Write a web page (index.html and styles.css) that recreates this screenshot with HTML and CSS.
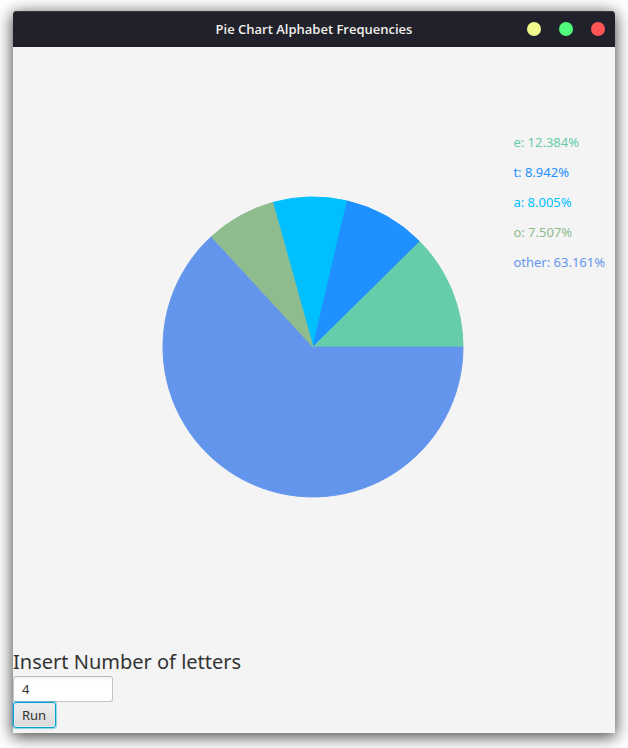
FILE: index.html
```html
<!DOCTYPE html>
<html lang="en">
<head>
<meta charset="utf-8">
<title>Pie Chart Alphabet Frequencies</title>
<link rel="stylesheet" href="styles.css">
</head>
<body>
<div class="window">
  <header class="titlebar">
    <h1 class="title">Pie Chart Alphabet Frequencies</h1>
    <div class="controls">
      <button class="control minimize" type="button" aria-label="Minimize"></button>
      <button class="control maximize" type="button" aria-label="Maximize"></button>
      <button class="control close" type="button" aria-label="Close"></button>
    </div>
  </header>
  <main class="content">
    <section class="chart-area">
      <svg class="pie" viewBox="-151 -151 304 302" width="304" height="302" role="img" aria-label="Letter frequencies">
        <path class="slice-a" d="M0 0L34.3 -146A150 150 0 0 0 -40.3 -144.5Z"/>
        <path class="slice-t" d="M0 0L106.8 -105.3A150 150 0 0 0 34.3 -146Z"/>
        <path class="slice-e" d="M0 0L150 0A150 150 0 0 0 106.8 -105.3Z"/>
        <path class="slice-other" d="M0 0L-101.6 -110.4A150 150 0 1 0 150 0Z"/>
        <path class="slice-o" d="M0 0L-40.3 -144.5A150 150 0 0 0 -101.6 -110.4Z"/>
      </svg>
      <ul class="legend">
        <li class="text-e">e: 12.384%</li>
        <li class="text-t">t: 8.942%</li>
        <li class="text-a">a: 8.005%</li>
        <li class="text-o">o: 7.507%</li>
        <li class="text-other">other: 63.161%</li>
      </ul>
    </section>
    <form class="form">
      <label class="label" for="count">Insert Number of letters</label>
      <input class="field" id="count" type="text" value="4">
      <button class="run" type="button">Run</button>
    </form>
  </main>
</div>
</body>
</html>
```
FILE: styles.css
```css
* {
  box-sizing: border-box;
}

body {
  margin: 0;
  min-height: 100vh;
  padding: 11px 13px 15px;
  display: flex;
  background: #fff;
  color: #333;
  font: 13px/18px "Noto Sans", sans-serif;
}

.window {
  flex: 1;
  display: flex;
  flex-direction: column;
  background: #f4f4f4;
  border-radius: 4px 4px 0 0;
  box-shadow: 0 3px 16px 1px rgba(0, 0, 0, 0.72);
}

.titlebar {
  display: grid;
  grid-template-columns: 1fr auto 1fr;
  align-items: center;
  height: 36px;
  padding: 0 10px;
  background: #21212b;
  box-shadow: inset 0 1px #363c42;
  border-radius: 4px 4px 0 0;
}

.title {
  grid-column: 2;
  margin: 0;
  color: #f0f0ea;
  font-family: "Open Sans", "Noto Sans", sans-serif;
  font-size: 13px;
  font-weight: 600;
}

.controls {
  display: flex;
  justify-content: flex-end;
  gap: 18px;
}

.control {
  width: 14px;
  height: 14px;
  padding: 0;
  border: 0;
  border-radius: 50%;
}

.minimize { background: #f1fa8c; }
.maximize { background: #50fa7b; }
.close { background: #ff5555; }

.content {
  flex: 1;
  display: flex;
  flex-direction: column;
  justify-content: space-between;
  padding-bottom: 5px;
}

.chart-area {
  display: grid;
  grid-template-columns: 1fr auto 1fr;
  align-items: start;
  padding-top: 80px;
}

.pie {
  grid-column: 2;
  display: block;
  margin-top: 69px;
}

.legend {
  justify-self: end;
  margin: 0;
  padding: 0 10px 0 0;
  list-style: none;
  line-height: 30px;
}

.slice-e { fill: #66cdaa; stroke: #66cdaa; }
.slice-t { fill: #1e90ff; stroke: #1e90ff; }
.slice-a { fill: #00bfff; stroke: #00bfff; }
.slice-o { fill: #8fbc8f; stroke: #8fbc8f; }
.slice-other { fill: #6495ed; stroke: #6495ed; }

.text-e { color: #66cdaa; }
.text-t { color: #1e90ff; }
.text-a { color: #00bfff; }
.text-o { color: #8fbc8f; }
.text-other { color: #6495ed; }

.form {
  display: flex;
  flex-direction: column;
  align-items: flex-start;
}

.label {
  font-size: 20px;
  line-height: 28px;
}

.field {
  width: 100px;
  height: 26px;
  padding: 0 8px;
  border: 1px solid #c4c4c4;
  border-top-color: #b8b8b8;
  border-radius: 3px;
  background: linear-gradient(#f2f2f2, #fff 4px);
  color: #333;
  font: inherit;
}

.run {
  height: 26px;
  padding: 0 9px 0 8px;
  border: 1px solid #039ed3;
  border-radius: 3px;
  background: linear-gradient(#efefef, #d9d9d9);
  box-shadow: inset 0 0 0 1px #e4eef2, 0 0 1px 1px rgba(3, 158, 211, 0.4);
  color: #333;
  font: inherit;
}
```
